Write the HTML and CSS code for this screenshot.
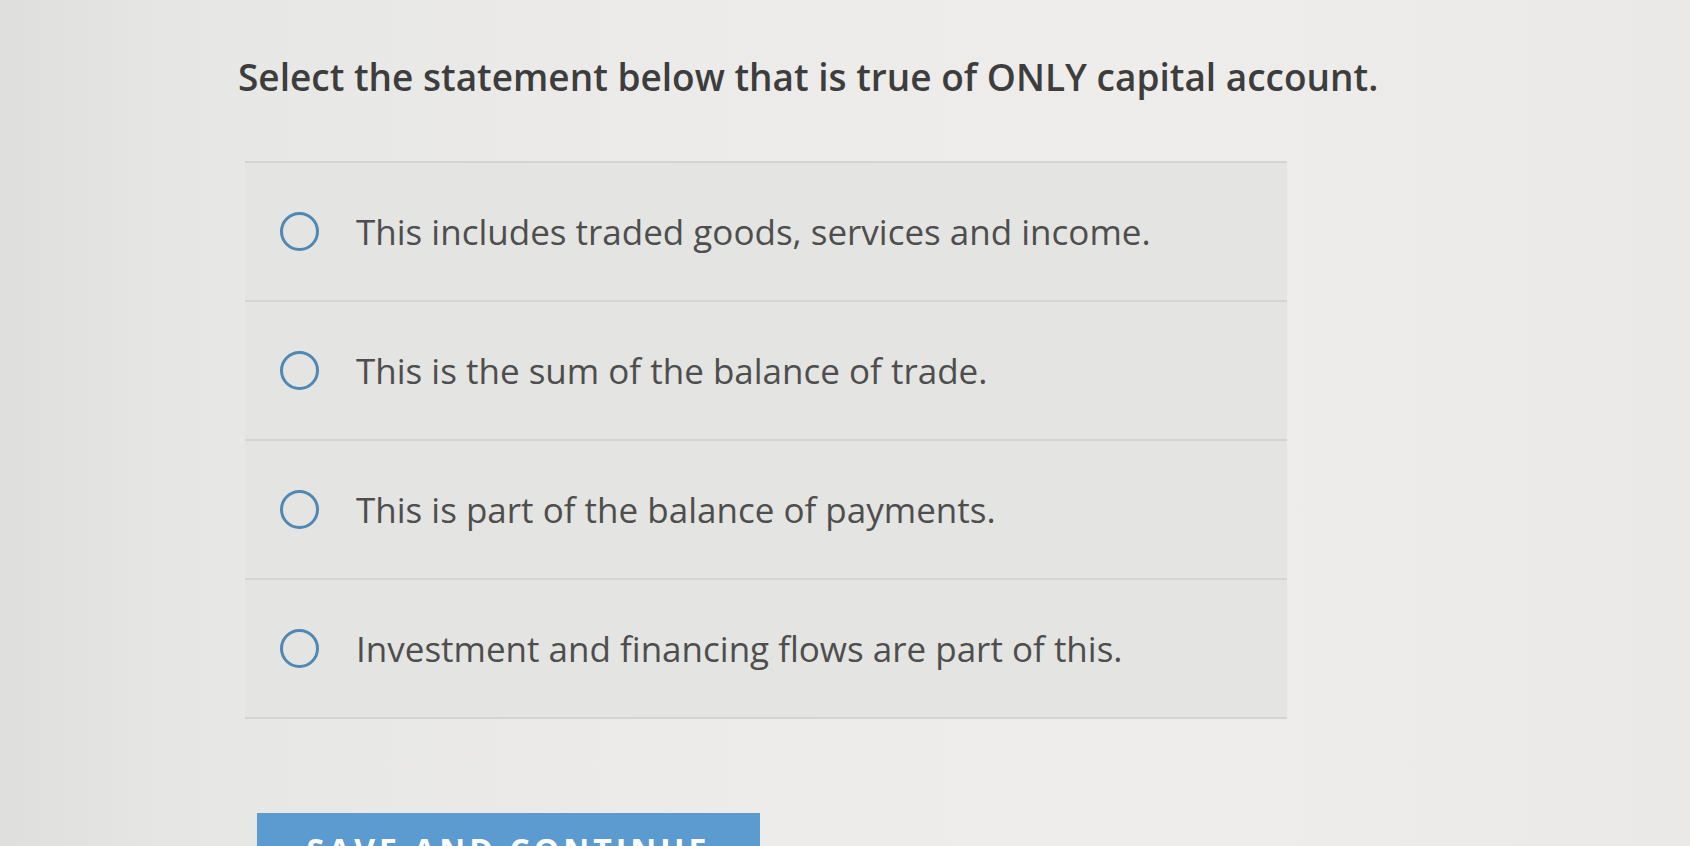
FILE: index.html
```html
<!DOCTYPE html>
<html lang="en">
<head>
<meta charset="utf-8">
<title>Question</title>
<link rel="stylesheet" href="styles.css">
</head>
<body>
<main class="page">
  <h1 class="title">Select the statement below that is true of ONLY capital account.</h1>
  <div class="options">
    <label class="option"><span class="radio"></span><span class="label">This includes traded goods, services and income.</span></label>
    <label class="option"><span class="radio"></span><span class="label">This is the sum of the balance of trade.</span></label>
    <label class="option"><span class="radio"></span><span class="label">This is part of the balance of payments.</span></label>
    <label class="option"><span class="radio"></span><span class="label">Investment and financing flows are part of this.</span></label>
  </div>
  <button class="submit">SAVE AND CONTINUE</button>
</main>
</body>
</html>
```
FILE: styles.css
```css
html, body {
  margin: 0;
  height: 100%;
  overflow: hidden;
}
body {
  background: linear-gradient(90deg, #dfdfdd 0%, #e7e7e5 12%, #ecebe9 40%, #eeedeb 70%, #eae9e7 100%);
  font-family: "Open Sans", "Liberation Sans", sans-serif;
}
.page {
  padding: 52px 0 0 238px;
}
.title {
  margin: 0;
  font-size: 37px;
  line-height: 50px;
  font-weight: 600;
  color: #3d3d3d;
}
.options {
  margin: 59px 0 0 7px;
  width: 1042px;
  border-top: 2px solid #d4d4d2;
}
.option {
  display: flex;
  align-items: center;
  height: 137px;
  padding-left: 35px;
  background: #e4e4e2;
  border-bottom: 2px solid #d4d4d2;
}
.radio {
  flex: none;
  width: 33px;
  height: 33px;
  border: 3px solid #4f88b5;
  border-radius: 50%;
  margin-right: 37px;
}
.label {
  font-size: 35px;
  color: #4e4e4e;
}
.submit {
  display: block;
  margin: 94px 0 0 19px;
  width: 503px;
  padding: 17px 0 24px;
  border: 0;
  background: #5b9bd0;
  color: #fff;
  font-family: "Open Sans", "Liberation Sans", sans-serif;
  font-size: 32px;
  line-height: 40px;
  font-weight: 700;
  letter-spacing: 4px;
  text-align: center;
}
```
